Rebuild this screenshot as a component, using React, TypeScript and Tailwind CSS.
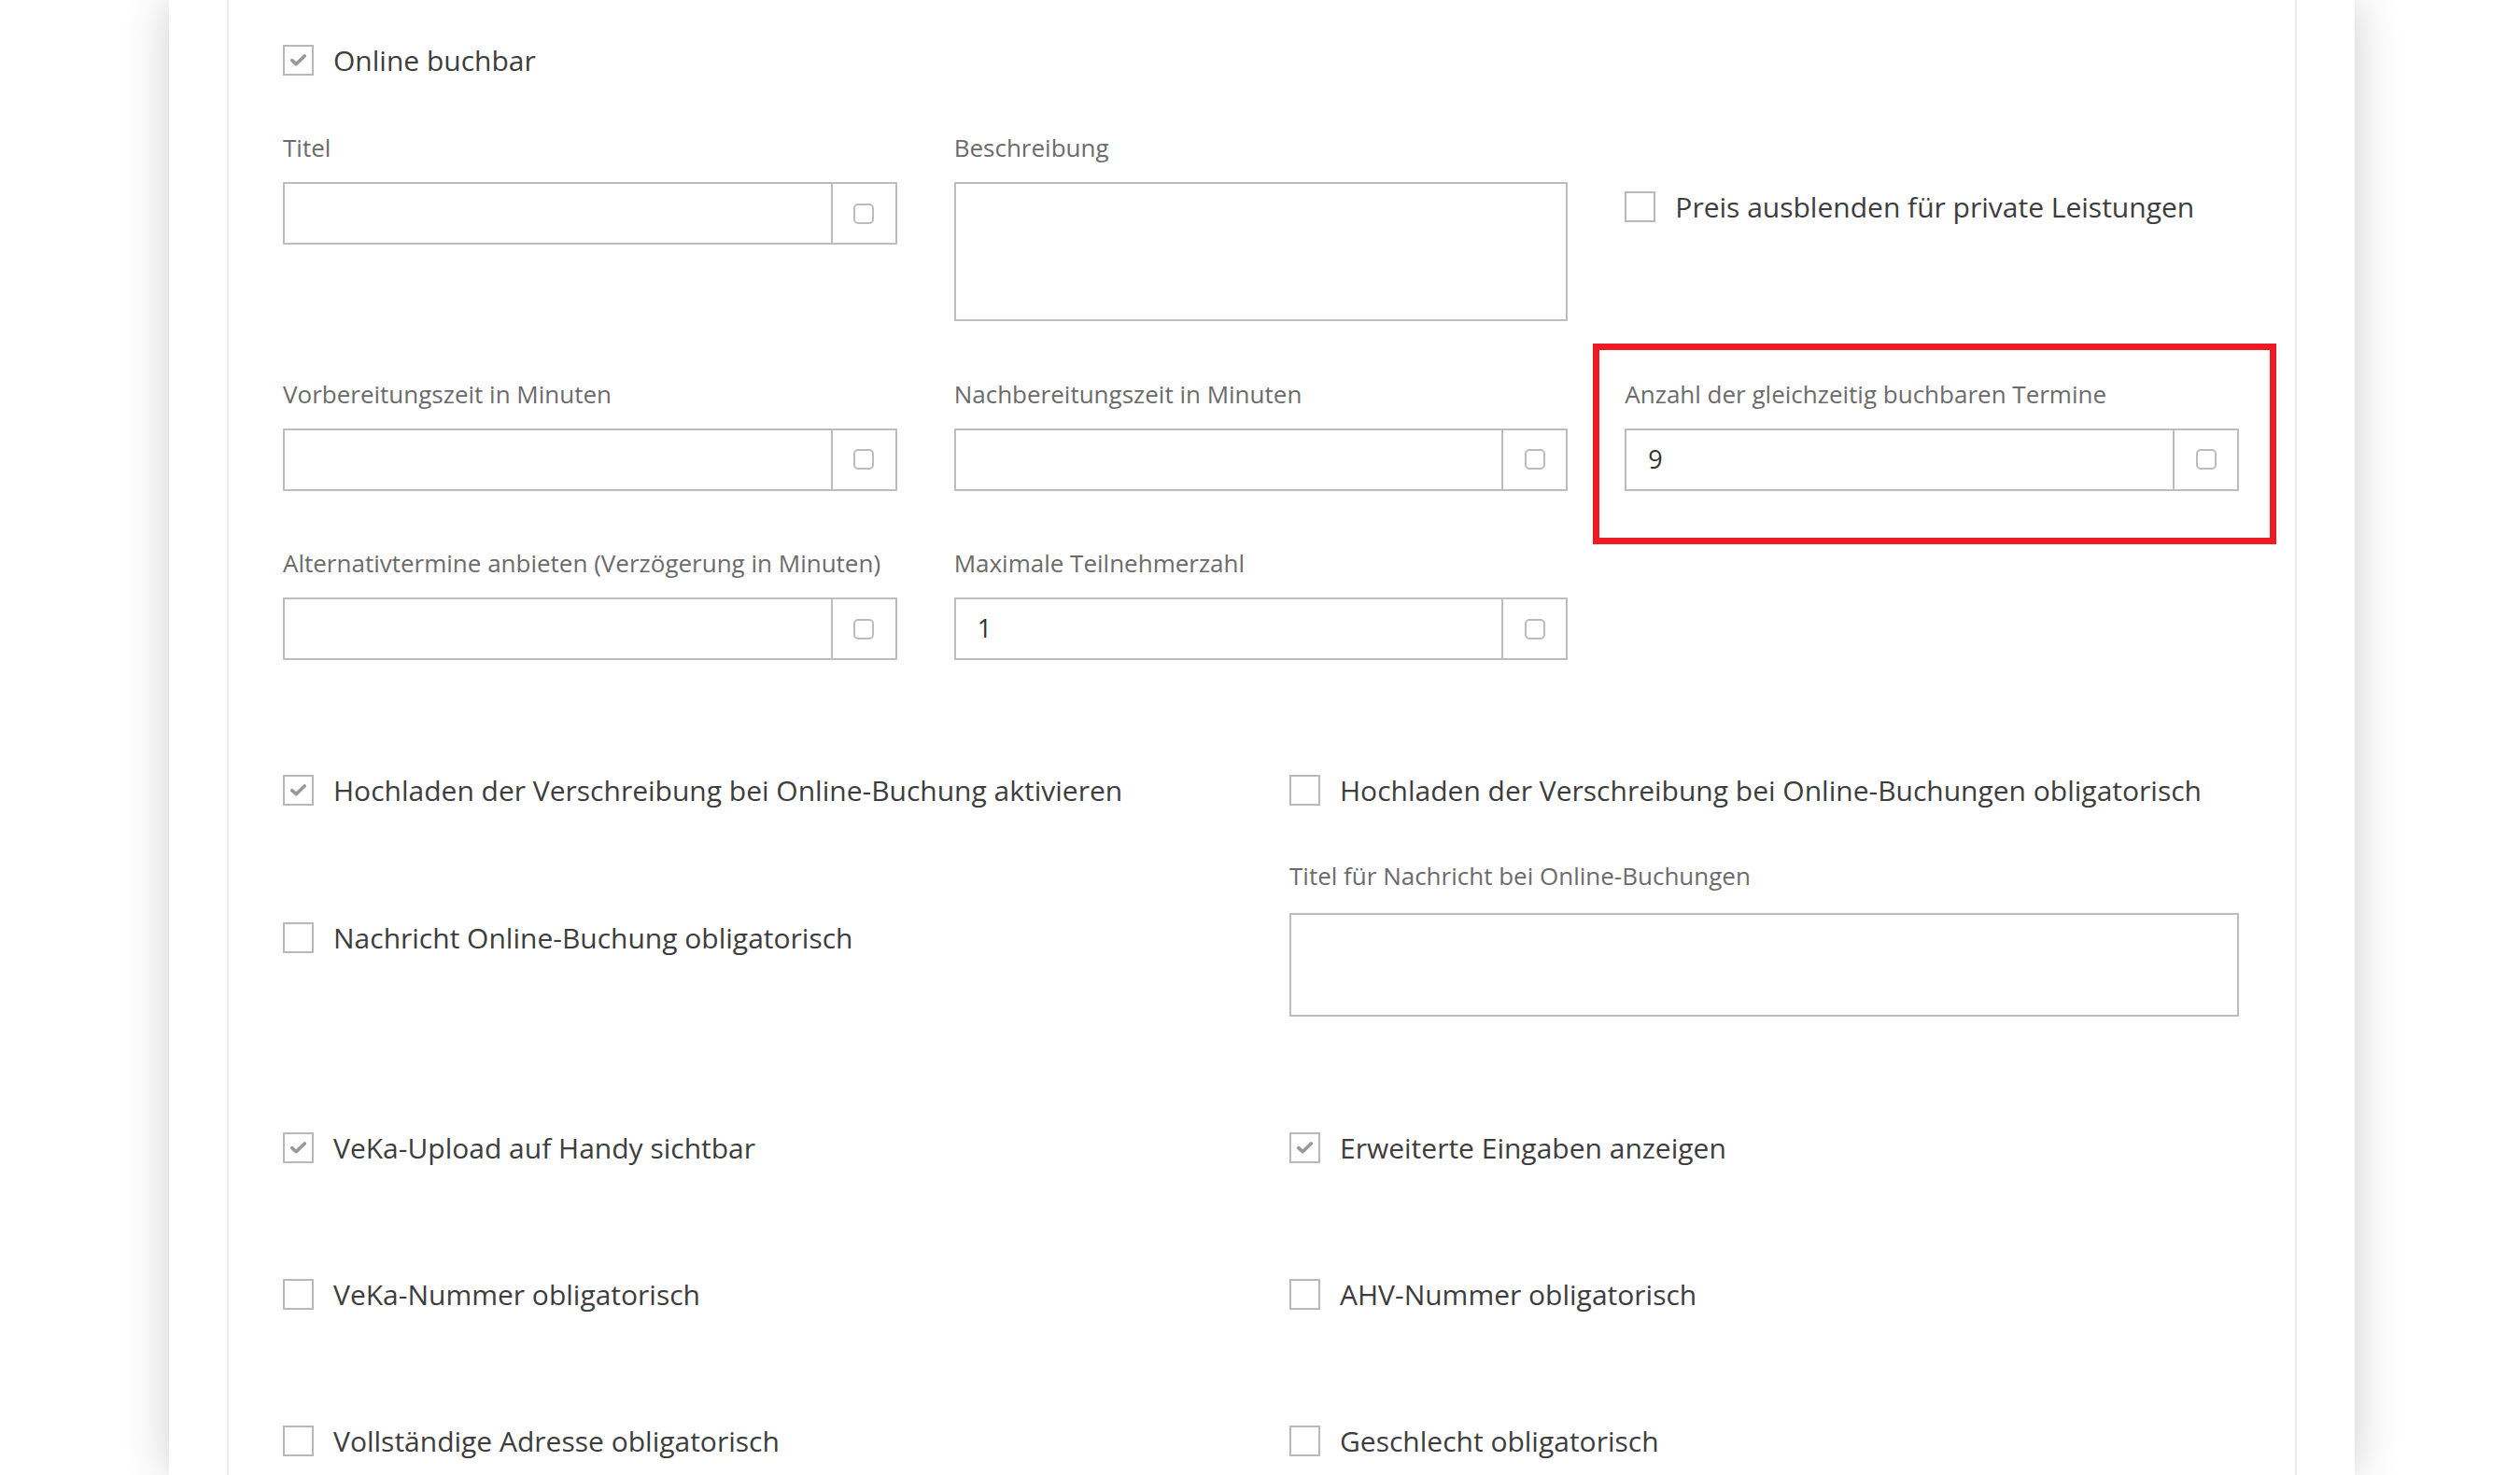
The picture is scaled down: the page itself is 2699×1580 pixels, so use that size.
import React from "react";

type CheckProps = {
  label: string;
  checked?: boolean;
};

const Checkbox = ({ label, checked = false }: CheckProps) => {
  return (
    <label className="flex items-center gap-[21px] h-[33px]">
      <span className="w-[33px] h-[33px] shrink-0 border-2 border-[#b8b8b8] bg-white flex items-center justify-center">
        {checked && (
          <svg width="17" height="13" viewBox="0 0 17 13" fill="none">
            <path
              d="M1.8 6.6 L6.2 10.6 L15.2 2"
              stroke="#999999"
              strokeWidth="3.6"
              strokeLinecap="round"
              strokeLinejoin="round"
            />
          </svg>
        )}
      </span>
      <span className="text-[30px] leading-[36px] text-[#3d3d3d] whitespace-nowrap">
        {label}
      </span>
    </label>
  );
};

const Label = ({ children }: { children: React.ReactNode }) => (
  <div className="h-[36px] text-[26px] leading-[36px] text-[#6b6b6b] whitespace-nowrap mb-[19px]">
    {children}
  </div>
);

const SquareIcon = () => (
  <svg width="22" height="22" viewBox="0 0 22 22" fill="none">
    <rect
      x="1"
      y="1"
      width="20"
      height="20"
      rx="4"
      stroke="#bcbcbc"
      strokeWidth="2"
    />
  </svg>
);

const AddonInput = ({ value }: { value?: string }) => (
  <div className="flex h-[67px] border-2 border-[#bdbdbd] bg-white">
    <div className="flex-1 flex items-center pl-[23px] text-[27px] text-[#333]">
      {value}
    </div>
    <div className="w-[69px] border-l-2 border-[#bdbdbd] flex items-center justify-center">
      <SquareIcon />
    </div>
  </div>
);

const Field = ({ label, value }: { label: string; value?: string }) => (
  <div>
    <Label>{label}</Label>
    <AddonInput value={value} />
  </div>
);

export default function App() {
  return (
    <div className="h-screen overflow-hidden bg-white font-['Open_Sans',sans-serif]">
      <div className="ml-[181px] w-[2341px] h-full bg-white shadow-[0_0_46px_rgba(0,0,0,0.2)] px-[62px]">
        <div className="h-full border-x-2 border-[#ececec] pl-[58px] pr-[60px] pt-[48px]">
          <Checkbox label="Online buchbar" checked />

          {/* upper form */}
          <div className="grid grid-cols-3 gap-x-[61px] gap-y-[59.5px] mt-[59px]">
            <Field label="Titel" />
            <div>
              <Label>Beschreibung</Label>
              <div className="h-[149px] border-2 border-[#bdbdbd] bg-white" />
            </div>
            <div className="pt-[65px]">
              <Checkbox label="Preis ausblenden für private Leistungen" />
            </div>

            <Field label="Vorbereitungszeit in Minuten" />
            <Field label="Nachbereitungszeit in Minuten" />
            <div className="relative">
              <Field label="Anzahl der gleichzeitig buchbaren Termine" value="9" />
              <div className="absolute -left-[34px] -top-[36px] -right-[40px] -bottom-[57px] border-[7px] border-[#ed1c24] pointer-events-none" />
            </div>

            <Field label="Alternativtermine anbieten (Verzögerung in Minuten)" />
            <Field label="Maximale Teilnehmerzahl" value="1" />
            <div />
          </div>

          {/* lower form */}
          <div className="grid grid-cols-2 gap-x-[61px] mt-[123px]">
            <Checkbox label="Hochladen der Verschreibung bei Online-Buchung aktivieren" checked />
            <Checkbox label="Hochladen der Verschreibung bei Online-Buchungen obligatorisch" />
          </div>

          <div className="grid grid-cols-2 gap-x-[61px] mt-[57px]">
            <div className="pt-[68px]">
              <Checkbox label="Nachricht Online-Buchung obligatorisch" />
            </div>
            <div>
              <div className="h-[36px] text-[26px] leading-[36px] text-[#6b6b6b] whitespace-nowrap mb-[22px]">
                Titel für Nachricht bei Online-Buchungen
              </div>
              <div className="h-[111px] border-2 border-[#bdbdbd] bg-white" />
            </div>
          </div>

          <div className="grid grid-cols-2 gap-x-[61px] mt-[124px]">
            <Checkbox label="VeKa-Upload auf Handy sichtbar" checked />
            <Checkbox label="Erweiterte Eingaben anzeigen" checked />
          </div>

          <div className="grid grid-cols-2 gap-x-[61px] mt-[124px]">
            <Checkbox label="VeKa-Nummer obligatorisch" />
            <Checkbox label="AHV-Nummer obligatorisch" />
          </div>

          <div className="grid grid-cols-2 gap-x-[61px] mt-[124px]">
            <Checkbox label="Vollständige Adresse obligatorisch" />
            <Checkbox label="Geschlecht obligatorisch" />
          </div>
        </div>
      </div>
    </div>
  );
}
